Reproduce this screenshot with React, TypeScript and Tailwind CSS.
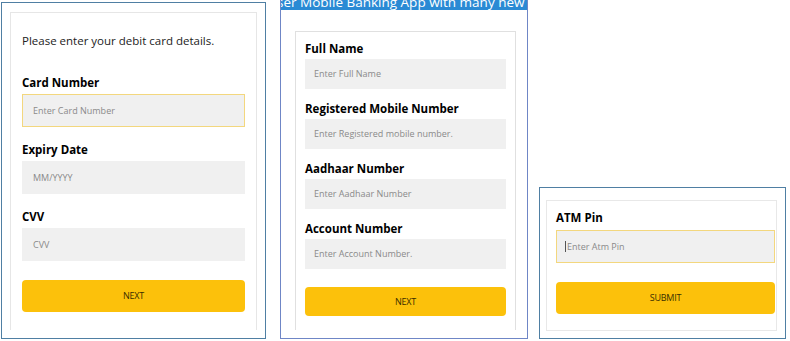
import React from 'react'

const font = { fontFamily: '"Open Sans", "Liberation Sans", sans-serif' }

type FieldProps = {
  label: string
  placeholder: string
  focused?: boolean
  cursor?: boolean
  height?: string
  pad?: string
  gap?: string
}

const Field = ({
  label,
  placeholder,
  focused,
  cursor,
  height = 'h-[33px]',
  pad = 'px-[10px]',
  gap = 'mb-[4px]'
}: FieldProps) => (
  <div className="flex flex-col">
    <label className={`text-[11.5px] font-bold leading-[14px] text-black ${gap}`}>{label}</label>
    <div
      className={`flex items-center ${height} ${pad} bg-[#f0f0f0] text-[9px] text-[#8a8a8a] border ${
        focused ? 'border-[#f3d77e]' : 'border-[#f0f0f0]'
      }`}>
      {cursor && <span className="w-px h-[11px] bg-[#555] -ml-[2px] mr-px" />}
      {placeholder}
    </div>
  </div>
)

const Button = ({ label, height = 'h-[32px]' }: { label: string; height?: string }) => (
  <button className={`${height} w-full rounded-[4px] bg-[#fcc10b] text-[9px] text-[#3a2f00] tracking-tight`}>
    {label}
  </button>
)

export default function App() {
  return (
    <div className="w-[790px] h-[341px] bg-white flex items-end pl-px pb-[2px]" style={font}>
      {/* debit card */}
      <div className="w-[265px] h-[337px] border-[1.5px] border-[#4f7fa3] pt-[9px] px-[8px]">
        <div className="h-[318px] border border-[#e6e6e6] border-b-0 px-[11px] pt-[20px]">
          <p className="text-[11.5px] text-[#222] leading-[16px] mb-[27px]">Please enter your debit card details.</p>
          <div className="flex flex-col gap-[16px]">
            <Field label="Card Number" placeholder="Enter Card Number" focused />
            <Field label="Expiry Date" placeholder="MM/YYYY" />
            <Field label="CVV" placeholder="CVV" />
          </div>
          <div className="mt-[19px]">
            <Button label="NEXT" />
          </div>
        </div>
      </div>

      {/* registration */}
      <div className="ml-[14px] w-[248px] h-[339px] border-[1.5px] border-[#6f86c6] border-t-0 flex flex-col">
        <div className="h-[10px] bg-[#2a8ad4] overflow-hidden">
          <p className="text-[13.5px] leading-[14px] text-white whitespace-nowrap -mt-[5px] -ml-[4px]">
            ser Mobile Banking App with many new d
          </p>
        </div>
        <div className="flex-1 pt-[21px] pl-[14px] pr-[11px]">
          <div className="h-[299px] border border-[#e0e0e0] border-b-0 px-[9px] pt-[10px]">
            <div className="flex flex-col gap-[13px]">
              <Field label="Full Name" placeholder="Enter Full Name" height="h-[30px]" pad="px-[8px]" gap="mb-[3px]" />
              <Field
                label="Registered Mobile Number"
                placeholder="Enter Registered mobile number."
                height="h-[30px]"
                pad="px-[8px]"
                gap="mb-[3px]"
              />
              <Field label="Aadhaar Number" placeholder="Enter Aadhaar Number" height="h-[30px]" pad="px-[8px]" gap="mb-[3px]" />
              <Field label="Account Number" placeholder="Enter Account Number." height="h-[30px]" pad="px-[8px]" gap="mb-[3px]" />
            </div>
            <div className="mt-[18px]">
              <Button label="NEXT" height="h-[29px]" />
            </div>
          </div>
        </div>
      </div>

      {/* atm pin */}
      <div className="ml-[11px] w-[247px] h-[152px] border-[1.5px] border-[#4f7fa3] pt-[12px] pl-[6px] pr-[8px] pb-[7px]">
        <div className="h-full border border-[#e8e8e8] pl-[9px] pr-px pt-[10px]">
          <Field label="ATM Pin" placeholder="Enter Atm Pin" focused cursor gap="mb-[5px]" />
          <div className="mt-[19px]">
            <Button label="SUBMIT" />
          </div>
        </div>
      </div>
    </div>
  )
}
